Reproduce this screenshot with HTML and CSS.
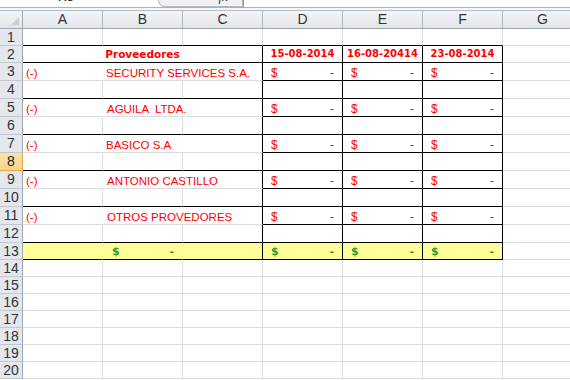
FILE: index.html
```html
<!DOCTYPE html>
<html lang="es">
<head>
    <meta charset="UTF-8">
    <meta name="viewport" content="width=device-width, initial-scale=1.0">
    <link rel="stylesheet" href="styles.css">
</head>
<body>
    <!-- Formula bar (only its bottom edge is visible) -->
    <div class="formula-bar">
        <div class="name-box">K8</div>
        <div class="fx-box"><span class="fx">fx</span></div>
        <div class="formula-input"></div>
    </div>
    <div class="bar-gap"></div>

    <div class="sheet">
        <!-- column headers -->
        <div class="corner"><span class="corner-mark"></span></div>
        <div class="ch">A</div>
        <div class="ch">B</div>
        <div class="ch">C</div>
        <div class="ch">D</div>
        <div class="ch">E</div>
        <div class="ch">F</div>
        <div class="ch">G</div>

        <!-- row 1 -->
        <div class="rh">1</div>
        <div class="c bb"></div><div class="c bb"></div><div class="c bb"></div>
        <div class="c bb"></div><div class="c bb"></div><div class="c bb"></div>
        <div class="c"></div>

        <!-- row 2 -->
        <div class="rh">2</div>
        <div class="c bb br head title span3">Proveedores</div>
        <div class="c bb br head">15-08-2014</div>
        <div class="c bb br head">16-08-20414</div>
        <div class="c bb br head">23-08-2014</div>
        <div class="c"></div>

        <!-- row 3 -->
        <div class="rh">3</div>
        <div class="c nr txt">(-)</div>
        <div class="c br txt span2">SECURITY SERVICES S.A.</div>
        <div class="c bb br money"><span>$</span><span>-</span></div>
        <div class="c bb br money"><span>$</span><span>-</span></div>
        <div class="c bb br money"><span>$</span><span>-</span></div>
        <div class="c"></div>

        <!-- row 4 -->
        <div class="rh">4</div>
        <div class="c bb"></div><div class="c bb"></div><div class="c bb br"></div>
        <div class="c bb br"></div><div class="c bb br"></div><div class="c bb br"></div>
        <div class="c"></div>

        <!-- row 5 -->
        <div class="rh">5</div>
        <div class="c nr txt">(-)</div>
        <div class="c br txt indent span2">AGUILA  LTDA.</div>
        <div class="c bb br money"><span>$</span><span>-</span></div>
        <div class="c bb br money"><span>$</span><span>-</span></div>
        <div class="c bb br money"><span>$</span><span>-</span></div>
        <div class="c"></div>

        <!-- row 6 -->
        <div class="rh">6</div>
        <div class="c bb"></div><div class="c bb"></div><div class="c bb br"></div>
        <div class="c bb br"></div><div class="c bb br"></div><div class="c bb br"></div>
        <div class="c"></div>

        <!-- row 7 -->
        <div class="rh">7</div>
        <div class="c nr txt">(-)</div>
        <div class="c br txt span2">BASICO S.A</div>
        <div class="c bb br money"><span>$</span><span>-</span></div>
        <div class="c bb br money"><span>$</span><span>-</span></div>
        <div class="c bb br money"><span>$</span><span>-</span></div>
        <div class="c"></div>

        <!-- row 8 (active row) -->
        <div class="rh sel">8</div>
        <div class="c bb"></div><div class="c bb"></div><div class="c bb br"></div>
        <div class="c bb br"></div><div class="c bb br"></div><div class="c bb br"></div>
        <div class="c"></div>

        <!-- row 9 -->
        <div class="rh">9</div>
        <div class="c nr txt">(-)</div>
        <div class="c br txt indent span2">ANTONIO CASTILLO</div>
        <div class="c bb br money"><span>$</span><span>-</span></div>
        <div class="c bb br money"><span>$</span><span>-</span></div>
        <div class="c bb br money"><span>$</span><span>-</span></div>
        <div class="c"></div>

        <!-- row 10 -->
        <div class="rh">10</div>
        <div class="c bb"></div><div class="c bb"></div><div class="c bb br"></div>
        <div class="c bb br"></div><div class="c bb br"></div><div class="c bb br"></div>
        <div class="c"></div>

        <!-- row 11 -->
        <div class="rh">11</div>
        <div class="c nr txt">(-)</div>
        <div class="c br txt indent span2">OTROS PROVEDORES</div>
        <div class="c bb br money"><span>$</span><span>-</span></div>
        <div class="c bb br money"><span>$</span><span>-</span></div>
        <div class="c bb br money"><span>$</span><span>-</span></div>
        <div class="c"></div>

        <!-- row 12 -->
        <div class="rh">12</div>
        <div class="c bb"></div><div class="c bb"></div><div class="c bb br"></div>
        <div class="c bb br"></div><div class="c bb br"></div><div class="c bb br"></div>
        <div class="c"></div>

        <!-- row 13: totals -->
        <div class="rh">13</div>
        <div class="c bb nr total"></div>
        <div class="c bb nr total money green wide"><span>$</span><span>-</span></div>
        <div class="c bb br total"></div>
        <div class="c bb br total money green"><span>$</span><span>-</span></div>
        <div class="c bb br total money green"><span>$</span><span>-</span></div>
        <div class="c bb br total money green"><span>$</span><span>-</span></div>
        <div class="c"></div>

        <!-- rows 14 - 20 -->
        <div class="rh">14</div>
        <div class="c"></div><div class="c"></div><div class="c"></div><div class="c"></div><div class="c"></div><div class="c"></div><div class="c"></div>
        <div class="rh">15</div>
        <div class="c"></div><div class="c"></div><div class="c"></div><div class="c"></div><div class="c"></div><div class="c"></div><div class="c"></div>
        <div class="rh">16</div>
        <div class="c"></div><div class="c"></div><div class="c"></div><div class="c"></div><div class="c"></div><div class="c"></div><div class="c"></div>
        <div class="rh">17</div>
        <div class="c"></div><div class="c"></div><div class="c"></div><div class="c"></div><div class="c"></div><div class="c"></div><div class="c"></div>
        <div class="rh">18</div>
        <div class="c"></div><div class="c"></div><div class="c"></div><div class="c"></div><div class="c"></div><div class="c"></div><div class="c"></div>
        <div class="rh">19</div>
        <div class="c"></div><div class="c"></div><div class="c"></div><div class="c"></div><div class="c"></div><div class="c"></div><div class="c"></div>
        <div class="rh">20</div>
        <div class="c"></div><div class="c"></div><div class="c"></div><div class="c"></div><div class="c"></div><div class="c"></div><div class="c"></div>
    </div>
</body>
</html>
```

FILE: styles.css
```css
body {
    margin: 0;
    background-color: #ffffff;
    font-family: "Liberation Sans", Arial, sans-serif;
    overflow: hidden;
}

/* Formula bar - cut off at the top of the shot */
.formula-bar {
    display: flex;
    height: 7px;
    overflow: hidden;
    border-bottom: 1px solid #a9b0b9;
}

.name-box {
    width: 158px;
    padding-left: 58px;
    box-sizing: border-box;
    font-size: 13px;
    line-height: 13px;
    margin-top: -10px;
    color: #222;
}

.fx-box {
    width: 85px;
    box-sizing: border-box;
    overflow: hidden;
    border: 1px solid #b3b9c1;
    border-top: none;
    border-radius: 0 0 0 9px;
    background-color: #f1f2f4;
    padding-right: 14px;
}

.fx {
    display: block;
    margin-top: -10px;
    text-align: right;
    font-family: "Liberation Serif", serif;
    font-style: italic;
    font-size: 13px;
    line-height: 13px;
    color: #333;
}

.formula-input {
    flex: 1;
    border-left: 1px solid #8d949e;
}

.bar-gap {
    height: 2px;
    background-color: #f5f6f8;
    border-bottom: 1px solid #b6bcc4;
}

/* Worksheet grid */
.sheet {
    display: grid;
    grid-template-columns: 23px repeat(7, 80px);
    grid-template-rows: 18px 17px 17px repeat(10, 18px) 17px repeat(7, 17px);
    width: 583px;
}

.corner {
    position: relative;
    background: linear-gradient(#f4f5f7, #e1e5ea);
    border-right: 1px solid #9ea6b0;
    border-bottom: 1px solid #9ea6b0;
}

.corner-mark {
    position: absolute;
    right: 3px;
    bottom: 3px;
    width: 0;
    height: 0;
    border-left: 8px solid transparent;
    border-bottom: 8px solid #c9cdd3;
}

.ch, .rh {
    background: linear-gradient(#f4f5f7, #e1e5ea);
    color: #333;
    font-size: 14px;
    text-align: center;
}

.ch {
    line-height: 17px;
    border-right: 1px solid #b1b8c1;
    border-bottom: 1px solid #9ea6b0;
}

.rh {
    line-height: 16px;
    background: #e4e7eb;
    border-right: 1px solid #9ea6b0;
    border-bottom: 1px solid #c3c8cf;
}

.rh.sel {
    background: linear-gradient(#fbe3a8, #f8d48a);
    color: #222;
    border-right-color: #e3a54c;
    border-bottom-color: #f0a93f;
}

.c {
    background-color: #ffffff;
    border-right: 1px solid #dadcdd;
    border-bottom: 1px solid #dadcdd;
}

.bb { border-bottom-color: #000000; }
.br { border-right-color: #000000; }
.nr { border-right-color: transparent; }

.span2 { grid-column: span 2; }
.span3 { grid-column: span 3; }

/* Cell content */
.head {
    display: flex;
    align-items: flex-end;
    justify-content: center;
    font-family: "DejaVu Sans", Verdana, sans-serif;
    font-weight: bold;
    font-size: 10px;
    line-height: 14px;
    color: #ff0000;
    padding-bottom: 1px;
}

.head.title {
    font-size: 10.5px;
}

.txt {
    display: flex;
    align-items: flex-end;
    padding: 0 3px;
    font-size: 11.5px;
    line-height: 14px;
    color: #ff0000;
    white-space: pre;
}

.txt.indent {
    padding-left: 4px;
}

.money {
    display: flex;
    align-items: flex-end;
    justify-content: space-between;
    padding: 0 8px;
    font-size: 12px;
    line-height: 14px;
    color: #ff0000;
}

.total {
    background-color: #ffff99;
}

.money.green {
    color: #339933;
    font-family: "DejaVu Sans", Verdana, sans-serif;
    font-weight: bold;
    font-size: 11px;
}

.money.green.wide {
    padding-left: 9px;
}
```
